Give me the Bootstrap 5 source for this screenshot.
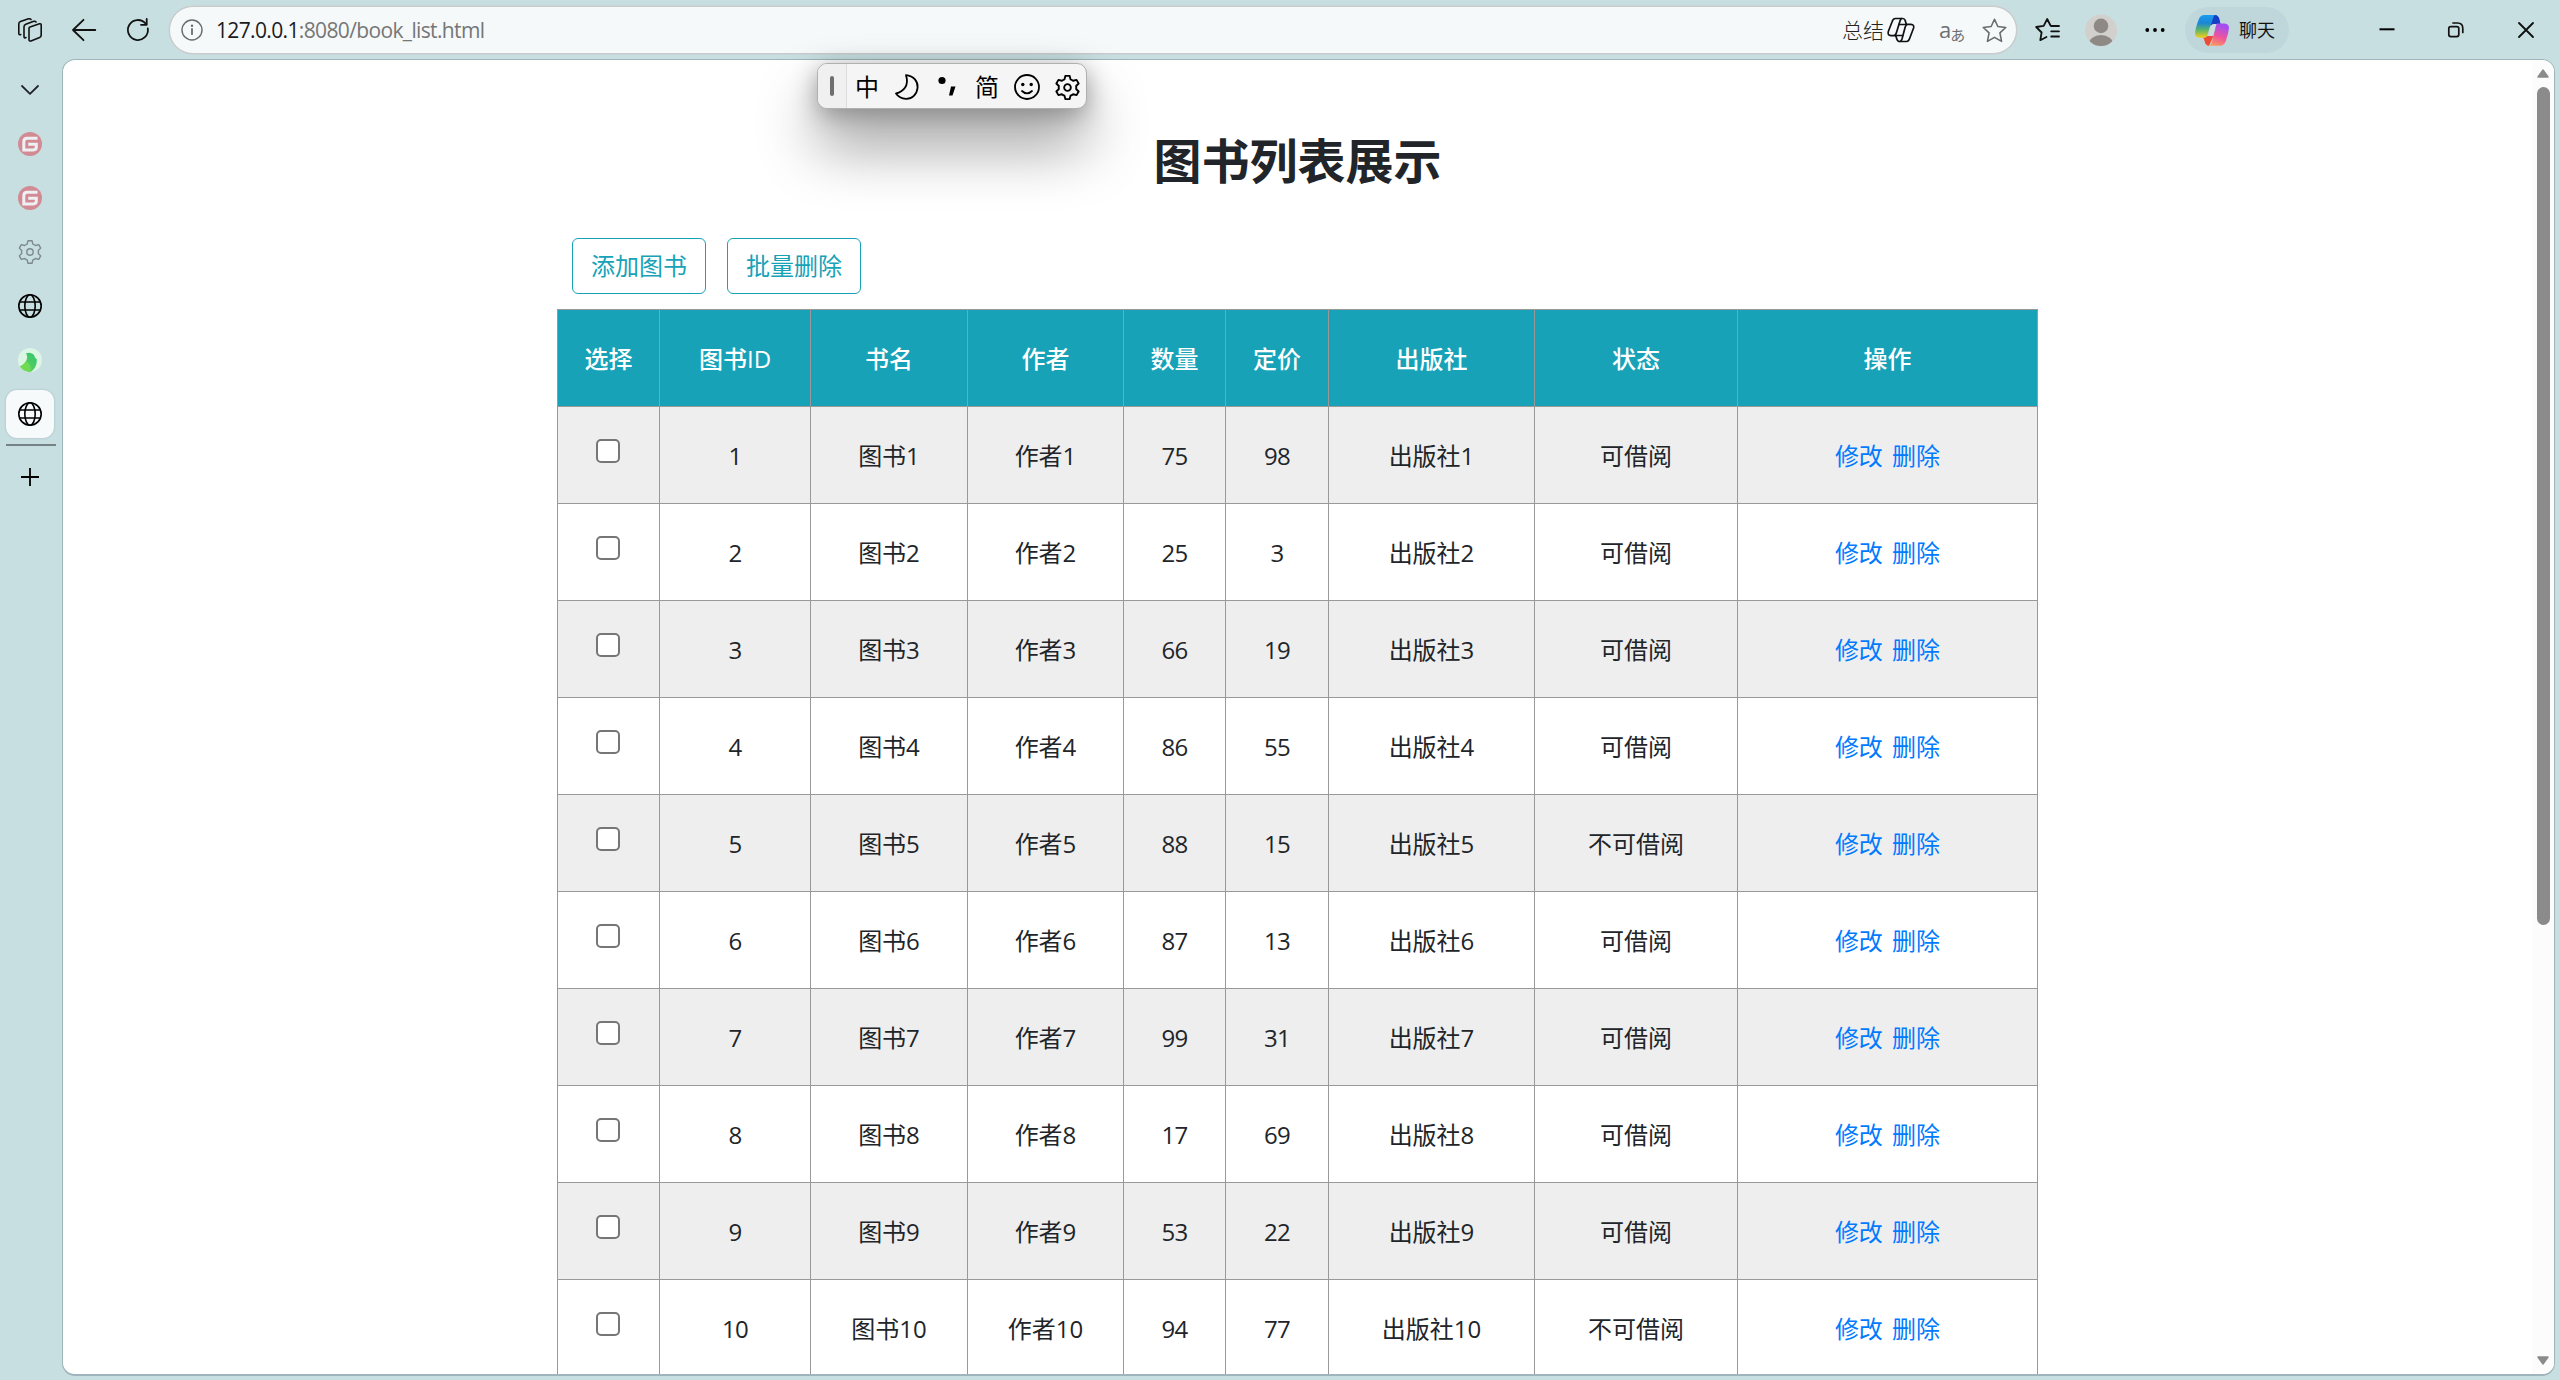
<!DOCTYPE html>
<html lang="zh-CN">
<head>
<meta charset="utf-8">
<title>图书列表展示</title>
<link href="https://cdn.jsdelivr.net/npm/bootstrap@5.3.0/dist/css/bootstrap.min.css" rel="stylesheet">
<style>
html,body{height:1380px;overflow:hidden}
body{background:#c8dfe2;color:#212529;font-family:"Open Sans","Noto Sans CJK SC",sans-serif;font-size:24px;line-height:36px}
svg{display:block;flex:none;overflow:visible}
.ln{fill:none;stroke:currentColor;stroke-linecap:round;stroke-linejoin:round}
.topbar{height:59px;padding:1px 0 0 18px;color:#111}
.urlbar{width:1848px;height:48px;margin:0 18px 0 19px;border:1px solid #c9cccd;border-radius:24px;background:#f5f9fa;padding:0 9px 0 11px;box-shadow:0 0 0 .5px #c9cccd}
.urltext{font-size:21px;letter-spacing:-.64px;color:#767676;margin-left:13px;line-height:30px}
.urltext b{font-weight:400;color:#1b1b1b}
.sumtext{font-size:21px;font-weight:300;color:#222;line-height:30px;margin-right:3px}
.translate{font-size:22px;line-height:24px;color:#6d6f70;width:27px;margin:0 16px 0 24px;white-space:nowrap}
.translate span{font-family:"Noto Sans CJK JP",sans-serif;font-size:15px;position:relative;top:3px;left:-1px}
.chatpill{width:104px;height:46px;border-radius:23px;background:#bfd6da;margin-left:20px;padding-left:10px}
.chatpill span{font-size:18px;margin-left:10px;line-height:30px;white-space:nowrap}
.side{width:62px;padding-top:4px}
.tabslot{width:60px;height:54px}
.tabactive{width:48px;height:48px;border-radius:11px;background:#f7fafb;box-shadow:0 0 2px rgba(60,90,100,.35)}
.sideline{width:50px;height:2px;margin:3px 0 0 6px;background:#758386}
.viewport-box{width:2493px;height:1317px;border:1px solid #9fb5bb;border-bottom-width:2px;border-radius:13px;background:#fff;overflow:hidden}
.bookwrap{width:1481px;margin-left:494px;padding-top:72px}
.booktitle{font-size:48px;font-weight:700;line-height:58px;margin:0 0 48px}
.tools{padding-left:15px;margin-bottom:15px;gap:21px}
.btn-tool{--bs-btn-color:#17a2b8;--bs-btn-border-color:#17a2b8;font-size:24px;line-height:36px;padding:9px 18px;border-radius:6px;width:134px;height:56px;white-space:nowrap}
.booktable{table-layout:fixed;width:1481px;border-collapse:collapse;text-align:center}
.booktable th,.booktable td{border:1px solid #999;height:97px;padding:0;vertical-align:middle;font-weight:400}
.booktable th{background:#17a2b8;color:#fff;font-weight:500;padding-top:2px}
.booktable td{padding-top:2px}
.booktable tbody tr:nth-child(odd){background:#eee}
.booktable .num{letter-spacing:-.8px}
.booktable .ops{word-spacing:3px}
.booktable a{color:#007bff;text-decoration:none}
.pick{appearance:none;display:block;width:24px;height:24px;border:2px solid #767676;border-radius:5px;background:#fff;margin:-10px 0 0 38px}
.scrolltrack{width:22px;background:#fcfcfc;padding:9px 0 9px}
.scrollthumb{width:13px;height:838px;border-radius:7px;background:#8b8b8b;margin-top:9px}
.imebar{position:absolute;left:817px;top:63px;width:270px;height:46px;border:1px solid #b0b0b0;border-radius:10px;background:#f5f5f5;color:#000;box-shadow:0 36px 60px rgba(0,0,0,.42),0 6px 24px rgba(0,0,0,.34)}
.imegrip{width:29px;height:44px;background:#f0f0f0;border-right:1px solid #ddd;border-radius:9px 0 0 9px}
.imegrip i{width:4px;height:20px;border-radius:2px;background:#6f6f6f}
.imecell{width:40px;flex:none;padding-top:2px}
</style>
<script src="https://cdn.jsdelivr.net/npm/bootstrap@5.3.0/dist/js/bootstrap.bundle.min.js"></script>
</head>
<body>
<svg width="0" height="0" class="position-absolute">
  <defs>
    <linearGradient id="cpA" x1="0" y1="0" x2="0" y2="1"><stop offset="0" stop-color="#1b9bf0"/><stop offset=".35" stop-color="#1a86d8"/><stop offset=".65" stop-color="#5bb56a"/><stop offset="1" stop-color="#f5cf1a"/></linearGradient>
    <linearGradient id="cpB" x1=".3" y1="0" x2="0" y2="1"><stop offset="0" stop-color="#a64df0"/><stop offset=".5" stop-color="#f0559a"/><stop offset="1" stop-color="#ffa552"/></linearGradient>
    <linearGradient id="bird" x1="0" y1="1" x2="1" y2="0"><stop offset="0" stop-color="#7bd957"/><stop offset=".5" stop-color="#4fcb62"/><stop offset="1" stop-color="#2cc76f"/></linearGradient>
  </defs>
  <symbol id="gear" viewBox="-12 -12 24 24"><path class="ln" d="M-2.9-7.9-2-11.2H2L2.9-7.9Q4.2-7.4 5.39-6.46L8.7-7.33 10.7-3.87 8.29-1.44Q8.5 0 8.29 1.44L10.7 3.87 8.7 7.33 5.39 6.46Q4.2 7.4 2.9 7.9L2 11.2H-2L-2.9 7.9Q-4.2 7.4-5.39 6.46L-8.7 7.33-10.7 3.87-8.29 1.44Q-8.5 0-8.29-1.44L-10.7-3.87-8.7-7.33-5.39-6.46Q-4.2-7.4-2.9-7.9Z"/><circle class="ln" r="3.2"/></symbol>
  <symbol id="globe" viewBox="0 0 24 24"><g class="ln" stroke-width="1.6"><circle cx="12" cy="12" r="11.2"/><ellipse cx="12" cy="12" rx="5.2" ry="11.2"/><path d="M1.8 8H22.2M1.8 16H22.2"/></g></symbol>
  <symbol id="gmark" viewBox="0 0 24 24"><circle cx="12" cy="12" r="12" fill="#d28b94"/><path d="M19.5 6.3H9.2Q5.8 6.3 5.8 9.7V17.9H15.4Q18.3 17.9 18.3 15V12.2H10.2" fill="none" stroke="#eef1f4" stroke-width="3"/></symbol>
</svg>

<header class="topbar d-flex align-items-center">
  <svg width="24" height="24" viewBox="0 0 24 24"><g class="ln" stroke-width="1.6"><path d="M11 10.5Q11 9.4 12 9L21.5 5.8Q23.2 5.5 23.2 7V17Q23.2 18.8 21.6 19.5L13 22.9Q11 23.5 11 21.5Z"/><path d="M8 19.6Q6 20.5 6 18.5V8.8Q6 7 7.8 6.3L15.7 3.3Q17.3 2.9 18 4"/><path d="M2.8 16.6Q.8 17.2.8 15.5V6Q.8 4.2 2.5 3.6L10.5.8Q12.3.4 13 1.5"/></g></svg>
  <svg width="24" height="24" viewBox="0 0 24 24" style="margin-left:30px"><path class="ln" stroke-width="1.8" d="M11.5 1.8 1 12 11.5 22.2M1 12H23.3"/></svg>
  <svg width="24" height="24" viewBox="0 0 24 24" style="margin-left:30px"><path class="ln" stroke-width="1.8" d="M21.8 10.5A10 10 0 1 1 19.5 5.5L20.5 6.6M20.7 1V6.8H15"/></svg>
  <div class="urlbar d-flex align-items-center">
    <svg width="22" height="22" viewBox="0 0 22 22" style="color:#686b6c"><circle class="ln" cx="11" cy="11" r="10" stroke-width="1.4"/><path class="ln" stroke-width="1.8" d="M11 10V15.2"/><circle cx="11" cy="6.8" r="1.2" fill="currentColor"/></svg>
    <div class="urltext"><b>127.0.0.1</b>:8080/book_list.html</div>
    <div class="sumtext ms-auto">总结</div>
    <svg width="28" height="26" viewBox="0 0 28 26"><g class="ln" stroke-width="1.7"><path d="M8.4 18.7H4Q.3 18.4 1.3 14.5L5 5Q6 1.5 8.4 1.5H15.6Q17.6 1.5 18.2 3.6L19.3 7.3M14.6 1.5Q13.6 2 13 4L9.4 15.8Q8.6 18.5 6.5 18.7"/><path d="M19.6 7.3H24Q27.4 7.6 26.6 11L22.6 21.5Q21.6 24.5 19.6 24.5H12.8Q10.5 24.5 9.8 22L8.8 18.7M13 24.5Q14.4 24 15 22L18.2 10Q19 7.5 20.6 7.3"/><path d="M11.8 7.5H19M9 18.5H15.5"/></g></svg>
    <div class="translate">a<span>あ</span></div>
    <svg width="25" height="25" viewBox="0 0 24 24" style="color:#686b6c"><path class="ln" stroke-width="1.5" d="M12 1.2 15.2 8.2 22.8 9.1 17.2 14.3 18.8 22.5 12 18.6 5.2 22.5 6.8 14.3 1.2 9.1 8.8 8.2Z"/></svg>
  </div>
  <svg width="25" height="24" viewBox="0 0 25 24"><path class="ln" stroke-width="1.8" d="M15.5 7.5 12.2 1 8.7 7.8 1.2 9 6.6 14.5 5.3 22.2 11.5 19M16.2 8H24M16.2 13.3H24M16.2 18.5H24"/></svg>
  <svg width="32" height="33" viewBox="0 0 32 32" style="margin-left:25px"><clipPath id="av"><circle cx="16" cy="16" r="15.5"/></clipPath><circle cx="16" cy="16" r="16" fill="#d2d0cd"/><g clip-path="url(#av)" fill="#8e8985"><circle cx="16" cy="11.4" r="7.3"/><ellipse cx="16" cy="30" rx="12.2" ry="9.5"/></g></svg>
  <svg width="20" height="6" viewBox="0 0 20 6" style="margin-left:28px"><circle cx="2.3" cy="3" r="1.9"/><circle cx="10" cy="3" r="1.9"/><circle cx="17.7" cy="3" r="1.9"/></svg>
  <div class="chatpill d-flex align-items-center">
    <svg width="34" height="31" viewBox="0 0 34 31"><path d="M9.5 0H20Q24 0 25 8.5H18.5Q15.5 9 14.5 13L12 21.5Q11.3 22.8 9 22.8H5Q0 22.8 0 18Q.5 13 3.5 5Q5 0 9.5 0Z" fill="url(#cpA)"/><path d="M20 0Q23.5 0 24.5 4.5L25.5 9H19Q16.5 9.2 15.6 11L18 3.5Q18.8.3 20 0Z" fill="#1540c5"/><path d="M7.5 22.8Q9 22.8 9.6 26Q10.5 30.8 14 30.8L18.5 21H13.5Q11.5 21 11 22.3Q9.8 23 7.5 22.8Z" fill="#ee4a35"/><path d="M22 8.5H29.5Q34 8.8 34 13Q33.5 18 31 25.5Q29.3 30.8 25 30.8H13.5Q16 30.5 17 26.5L20 15Q21 9 22 8.5Z" fill="url(#cpB)"/><path d="M18.6 9.3H21.3Q20.4 10.5 19.4 14.5L17.5 21H13.2L15.6 12.5Q16.4 9.6 18.6 9.3Z" fill="#c9dde0"/></svg>
    <span>聊天</span>
  </div>
  <svg width="16" height="16" viewBox="0 0 16 16" style="margin-left:90px"><path d="M.5 7.3H15.5" stroke="#000" stroke-width="2"/></svg>
  <svg width="16" height="16" viewBox="0 0 16 16" style="margin-left:53px"><g class="ln" stroke-width="1.7"><rect x=".8" y="4.6" width="10" height="10" rx="2"/><path d="M5 1H9.5Q14.8 1 14.8 6.5V10.5"/></g></svg>
  <svg width="16" height="16" viewBox="0 0 16 16" style="margin-left:54px"><path class="ln" stroke-width="1.9" d="M1 1 15 15M15 1 1 15"/></svg>
</header>

<div class="d-flex">
  <nav class="side">
    <div class="tabslot d-flex align-items-center justify-content-center"><svg width="18" height="10" viewBox="0 0 18 10"><path class="ln" stroke="#000" stroke-width="1.8" d="M1 1 9 8.8 17 1"/></svg></div>
    <div class="tabslot d-flex align-items-center justify-content-center"><svg width="24" height="24"><use href="#gmark"/></svg></div>
    <div class="tabslot d-flex align-items-center justify-content-center"><svg width="24" height="24"><use href="#gmark"/></svg></div>
    <div class="tabslot d-flex align-items-center justify-content-center" style="color:#7d8a8e"><svg width="24" height="24" stroke-width="1.4"><use href="#gear"/></svg></div>
    <div class="tabslot d-flex align-items-center justify-content-center text-black"><svg width="24" height="24"><use href="#globe"/></svg></div>
    <div class="tabslot d-flex align-items-center justify-content-center"><svg width="24" height="24" viewBox="0 0 24 24"><circle cx="12" cy="12" r="12" fill="#dcf5e4"/><path d="M8 5.2Q12.5 3.8 15.3 6.2Q16.8 7.8 17 9.8L18.8 11.2Q19.3 19.5 12.5 24Q5.8 24 2 18.6Q8 15.5 9 10.5Q9.3 7.3 8 5.2Z" fill="url(#bird)"/><path d="M2 18.6Q6 16.5 7.8 13.5Q13 14.5 12.5 24Q5.8 24 2 18.6Z" fill="#6fdb52"/></svg></div>
    <div class="tabslot d-flex align-items-center justify-content-center text-black"><div class="tabactive d-flex align-items-center justify-content-center"><svg width="24" height="24"><use href="#globe"/></svg></div></div>
    <div class="sideline"></div>
    <div class="tabslot d-flex align-items-center justify-content-center" style="height:61px"><svg width="18" height="18" viewBox="0 0 18 18"><path d="M9 0V18M0 9H18" stroke="#000" stroke-width="1.8"/></svg></div>
  </nav>

  <main class="viewport-box d-flex justify-content-between">
    <section class="bookwrap">
      <h1 class="booktitle text-center">图书列表展示</h1>
      <div class="tools d-flex">
        <button type="button" class="btn btn-outline-info btn-tool">添加图书</button>
        <button type="button" class="btn btn-outline-info btn-tool">批量删除</button>
      </div>
      <table class="booktable">
        <colgroup><col style="width:102px"><col style="width:151px"><col style="width:157px"><col style="width:156px"><col style="width:102px"><col style="width:103px"><col style="width:206px"><col style="width:203px"><col style="width:300px"></colgroup>
        <thead><tr><th>选择</th><th>图书ID</th><th>书名</th><th>作者</th><th>数量</th><th>定价</th><th>出版社</th><th>状态</th><th>操作</th></tr></thead>
        <tbody id="books"></tbody>
      </table>
    </section>
    <div class="scrolltrack d-flex flex-column align-items-center">
      <svg width="12" height="9" viewBox="0 0 12 9"><path d="M6 1 11 8H1Z" fill="#8b8b8b" stroke="#8b8b8b" stroke-width="1.5" stroke-linejoin="round"/></svg>
      <div class="scrollthumb"></div>
      <svg class="mt-auto" width="12" height="9" viewBox="0 0 12 9"><path d="M6 8 11 1H1Z" fill="#8b8b8b" stroke="#8b8b8b" stroke-width="1.5" stroke-linejoin="round"/></svg>
    </div>
  </main>
</div>

<div class="imebar d-flex align-items-center">
  <div class="imegrip d-flex align-items-center justify-content-center flex-shrink-0"><i></i></div>
  <div class="imecell text-center">中</div>
  <div class="imecell d-flex justify-content-center"><svg width="24" height="26" viewBox="0 0 24 26"><path class="ln" stroke-width="1.8" d="M11 1.2C19 2 23 7.5 22.6 13.5C22 20.5 17 25 11 24.8C6.5 24.5 3 22.5 1 19.5C8 18 14.5 12 11 1.2Z"/></svg></div>
  <div class="imecell d-flex justify-content-center"><svg width="18" height="24" viewBox="0 0 18 24"><circle cx="4" cy="5.5" r="3.6"/><path d="M13 11.5H17.5L14.5 20.5H11Z"/></svg></div>
  <div class="imecell text-center">简</div>
  <div class="imecell d-flex justify-content-center"><svg width="26" height="26" viewBox="0 0 26 26"><circle class="ln" cx="13" cy="13" r="12" stroke-width="1.8"/><circle cx="8.8" cy="10.5" r="1.7"/><circle cx="17.2" cy="10.5" r="1.7"/><path class="ln" stroke-width="1.8" d="M8 17Q13 21.8 18 17"/></svg></div>
  <div class="imecell d-flex justify-content-center"><svg width="25" height="25" stroke-width="1.8"><use href="#gear"/></svg></div>
</div>

<script>
const stock = [[75,98],[25,3],[66,19],[86,55],[88,15],[87,13],[99,31],[17,69],[53,22],[94,77]];
document.getElementById('books').innerHTML = stock.map(([count, price], i) => {
  const id = i + 1, state = id % 5 === 0 ? '不可借阅' : '可借阅';
  return `<tr><td><input type="checkbox" class="pick"></td><td class="num">${id}</td><td>图书${id}</td><td>作者${id}</td><td class="num">${count}</td><td class="num">${price}</td><td>出版社${id}</td><td>${state}</td><td class="ops"><a href="#">修改</a> <a href="#">删除</a></td></tr>`;
}).join('');
</script>
</body>
</html>
